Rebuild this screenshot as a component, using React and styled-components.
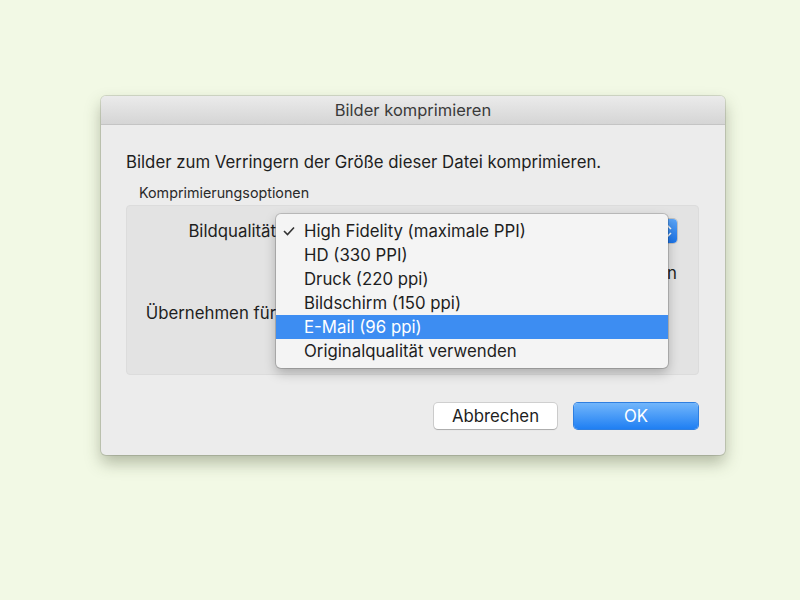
import React from "react";
import styled, { createGlobalStyle } from "styled-components";

const Global = createGlobalStyle`
  html, body {
    margin: 0;
    padding: 0;
    background: #f2f9e5;
  }
  body {
    font-family: Inter, "Noto Sans", sans-serif;
    color: #1e1e1e;
  }
`;

const Page = styled.div`
  width: 800px;
  height: 600px;
  padding: 96px 0 0 101px;
  box-sizing: border-box;
`;

const Window = styled.div`
  width: 624px;
  height: 359px;
  background: #ececec;
  border-radius: 5px;
  box-shadow: 0 0 0 1px rgba(0, 0, 0, 0.12), 0 8px 16px rgba(60, 70, 40, 0.35);
  display: flex;
  flex-direction: column;
`;

const TitleBar = styled.div`
  height: 28px;
  flex: none;
  display: flex;
  align-items: center;
  justify-content: center;
  background: linear-gradient(#ebebeb, #d5d5d5);
  border-bottom: 1px solid #c4c4c4;
  border-radius: 5px 5px 0 0;
  font-size: 16.5px;
  color: #3a3a3a;
`;

const Body = styled.div`
  flex: 1;
  display: flex;
  flex-direction: column;
  padding: 27px 27px 0 25px;
`;

const Intro = styled.div`
  font-size: 16.8px;
  line-height: 20px;
`;

const GroupTitle = styled.div`
  font-size: 14.3px;
  line-height: 18px;
  margin: 12px 0 3px 13px;
  color: #2a2a2a;
`;

const GroupBox = styled.div`
  position: relative;
  height: 170px;
  margin-right: -1px;
  background: #e3e3e3;
  border-radius: 4px;
  border: 1px solid #dcdcdc;
  box-sizing: border-box;
  display: grid;
  grid-template-columns: 149px 1fr;
  grid-template-rows: 26px 58px 22px;
  column-gap: 8px;
  padding: 12px 21px 0 0;
  align-items: center;
`;

const Label = styled.div`
  font-size: 16.8px;
  text-align: right;
  white-space: nowrap;
`;

const Popup = styled.div`
  height: 24px;
  width: ${(p) => p.width || "100%"};
  background: #fff;
  border-radius: 4px;
  box-shadow: 0 0 0 1px rgba(0, 0, 0, 0.15);
  display: flex;
  justify-content: flex-end;
`;

const PopupArrows = styled.div`
  width: 18px;
  background: linear-gradient(#5aa5f8, #1b74ea);
  border-radius: 0 4px 4px 0;
  display: flex;
  align-items: center;
  justify-content: center;
`;

const CheckRow = styled.div`
  grid-column: 2;
  justify-self: end;
  font-size: 16.8px;
  white-space: nowrap;
`;

const Menu = styled.div`
  position: absolute;
  z-index: 1;
  left: 149px;
  top: 8px;
  width: 392px;
  padding: 5px 0;
  background: #f4f4f4;
  border-radius: 5px;
  box-shadow: 0 0 0 1px rgba(0, 0, 0, 0.16), 0 5px 12px rgba(0, 0, 0, 0.25);
`;

const Item = styled.div`
  height: 24px;
  display: flex;
  align-items: center;
  font-size: 16.8px;
  color: ${(p) => (p.active ? "#fff" : "#1e1e1e")};
  background: ${(p) => (p.active ? "#3d8df2" : "transparent")};
`;

const Check = styled.span`
  width: 28px;
  flex: none;
  display: flex;
  justify-content: center;
  padding-right: 2px;
  box-sizing: border-box;
`;

const Footer = styled.div`
  display: flex;
  justify-content: flex-end;
  gap: 17px;
  margin-top: 28px;
`;

const Button = styled.button`
  width: ${(p) => p.width}px;
  height: 26px;
  border-radius: 4px;
  font-family: inherit;
  font-size: 16.8px;
  cursor: default;
  border: none;
  ${(p) =>
    p.primary
      ? `
    background: linear-gradient(#72b6fb, #1f7ff3);
    color: #fff;
    box-shadow: 0 0 0 1px #2f7fe0;
  `
      : `
    background: #fff;
    color: #1e1e1e;
    box-shadow: 0 0 0 1px rgba(0,0,0,0.12), 0 1px 1px rgba(0,0,0,0.18);
  `}
`;

const options = [
  "High Fidelity (maximale PPI)",
  "HD (330 PPI)",
  "Druck (220 ppi)",
  "Bildschirm (150 ppi)",
  "E-Mail (96 ppi)",
  "Originalqualität verwenden",
];

export default function App() {
  return (
    <Page>
      <Global />
      <Window>
        <TitleBar>Bilder komprimieren</TitleBar>
        <Body>
          <Intro>Bilder zum Verringern der Größe dieser Datei komprimieren.</Intro>
          <GroupTitle>Komprimierungsoptionen</GroupTitle>
          <GroupBox>
            <Label>Bildqualität</Label>
            <Popup>
              <PopupArrows>
                <svg width="8" height="14" viewBox="0 0 8 14">
                  <path d="M1 5 L4 2 L7 5 M1 9 L4 12 L7 9" fill="none" stroke="#fff" strokeWidth="1.5" />
                </svg>
              </PopupArrows>
            </Popup>
            <CheckRow>Zugeschnittene Bildbereiche löschen</CheckRow>
            <Label>Übernehmen für</Label>
            <Popup width="200px" />
            <Menu>
              {options.map((o, i) => (
                <Item key={o} active={i === 4}>
                  <Check>
                    {i === 0 ? (
                      <svg width="12" height="10" viewBox="0 0 12 10">
                        <path d="M1 5 L4.5 8.5 L11 1.5" fill="none" stroke="#333" strokeWidth="1.6" />
                      </svg>
                    ) : null}
                  </Check>
                  {o}
                </Item>
              ))}
            </Menu>
          </GroupBox>
          <Footer>
            <Button width={123}>Abbrechen</Button>
            <Button primary width={124}>OK</Button>
          </Footer>
        </Body>
      </Window>
    </Page>
  );
}
